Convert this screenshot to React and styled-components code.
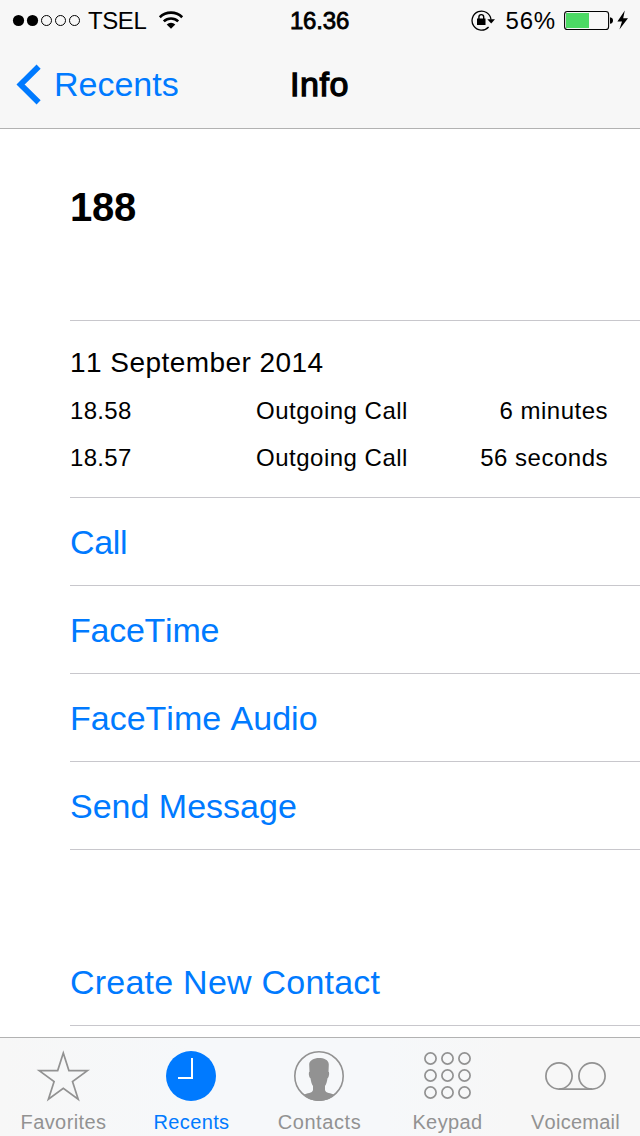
import React from "react";
import styled, { createGlobalStyle } from "styled-components";

const BLUE = "#007aff";
const GRAY = "#929292";
const HAIRLINE = "#c8c7cc";

const GlobalStyle = createGlobalStyle`
  * { box-sizing: border-box; }
  body {
    margin: 0;
    background: #fff;
    font-family: "Liberation Sans", Arial, sans-serif;
    font-kerning: none;
    color: #000;
  }
`;

const Screen = styled.div`
  display: flex;
  flex-direction: column;
  width: 640px;
  height: 1136px;
  overflow: hidden;
  background: #fff;
`;

const Header = styled.header`
  flex: none;
  height: 129px;
  background: #f7f7f7;
  border-bottom: 1px solid #b2b2b2;
`;

const StatusBar = styled.div`
  display: grid;
  grid-template-columns: 1fr auto 1fr;
  height: 40px;
  padding: 0 10px 0 12px;
  font-size: 24px;
  line-height: 42px;
`;

const StatusGroup = styled.div`
  display: flex;
  align-items: flex-start;
  justify-content: ${(p) => (p.$end ? "flex-end" : "flex-start")};

  svg { flex: none; display: block; }
`;

const Carrier = styled.span`
  margin: 0 11.5px 0 7px;
  letter-spacing: -0.4px;
`;

const Clock = styled.time`
  padding-right: 3px;
  letter-spacing: -0.2px;
  -webkit-text-stroke: 0.8px #000;
`;

const Percent = styled.span`
  margin: 0 8px 0 11px;
  letter-spacing: 0.8px;
`;

const NavBar = styled.nav`
  display: grid;
  grid-template-columns: 1fr auto 1fr;
  height: 88px;
  padding: 0 16px;
  font-size: 34px;
  line-height: 88px;
`;

const BackLink = styled.a`
  display: flex;
  align-items: flex-start;
  gap: 12px;
  color: ${BLUE};

  svg { display: block; margin-top: 24px; }
`;

const Title = styled.h1`
  margin: 0;
  padding-right: 1px;
  font-size: 34px;
  font-weight: normal;
  letter-spacing: 0.6px;
  -webkit-text-stroke: 1.3px #000;
`;

const Content = styled.main`
  flex: 1;
  min-height: 0;
  overflow: hidden;
  padding-left: 70px;
`;

const NumberBlock = styled.section`
  height: 192px;
  padding-top: 54px;
  border-bottom: 1px solid ${HAIRLINE};
`;

const PhoneNumber = styled.h2`
  margin: 0;
  font-size: 40px;
  line-height: 48px;
  letter-spacing: -0.2px;
`;

const History = styled.section`
  height: 177px;
  padding: 22px 32px 0 0;
  border-bottom: 1px solid ${HAIRLINE};
`;

const CallDate = styled.h3`
  margin: 0 0 4px;
  font-size: 28px;
  font-weight: normal;
  line-height: 40px;
  letter-spacing: 0.45px;
`;

const CallRow = styled.div`
  display: grid;
  grid-template-columns: 186px 1fr auto;
  height: 47px;
  font-size: 24px;
  line-height: 47px;
  letter-spacing: 0.5px;
`;

const CallTime = styled.span`
  letter-spacing: 0.3px;
`;

const Action = styled.button`
  display: block;
  width: 100%;
  height: ${(p) => (p.$spaced ? 176 : 88)}px;
  padding: ${(p) => (p.$spaced ? 88 : 0)}px 0 0;
  border: 0;
  border-bottom: 1px solid ${HAIRLINE};
  background: none;
  color: ${BLUE};
  font: inherit;
  font-size: 34px;
  line-height: 88px;
  text-align: left;
  letter-spacing: ${(p) => p.$tracking || 0}px;
`;

const TabBar = styled.footer`
  flex: none;
  display: grid;
  grid-template-columns: repeat(5, 128px);
  height: 99px;
  border-top: 1px solid #b2b2b2;
  background: linear-gradient(90deg, #f7f7f7 0%, #f6f8fa 30%, #f6f8fa 60%, #f7f7f7 80%);
`;

const Tab = styled.div`
  display: flex;
  flex-direction: column;
  align-items: center;
  padding-top: 10px;
  color: ${(p) => (p.$active ? BLUE : GRAY)};

  svg { display: block; }
`;

const TabLabel = styled.span`
  padding-right: 1px;
  font-size: 20px;
  line-height: 24px;
  margin-top: 6px;
  letter-spacing: ${(p) => p.$tracking}px;
`;

const SignalDots = () => (
  <svg width="69" height="40">
    {[0, 1, 2, 3, 4].map((i) => (
      <circle key={i} cx={6.5 + i * 14} cy="20.5" r={i < 2 ? 5.6 : 5}
        fill={i < 2 ? "#000" : "none"} stroke={i < 2 ? "none" : "#000"} strokeWidth="1" />
    ))}
  </svg>
);

const Wifi = () => (
  <svg width="26" height="40" viewBox="0 0 26 40" fill="none" stroke="#000" strokeWidth="2.6">
    <path d="M1.8 17.2a16 16 0 0 1 22.4 0" />
    <path d="M5.8 21.4a10.3 10.3 0 0 1 14.4 0" />
    <path d="M13 28.8l-4.3-4.2a6.2 6.2 0 0 1 8.6 0z" fill="#000" stroke="none" />
  </svg>
);

const RotationLock = () => (
  <svg width="24" height="40" viewBox="0 0 24 40" fill="none" stroke="#000">
    <path d="M17.6 27A9.5 9.5 0 1 1 20 19.5" strokeWidth="1.3" />
    <path d="M16.3 19.3H24L20.2 23.5z" fill="#000" stroke="none" />
    <rect x="6" y="18.5" width="8.5" height="6.5" fill="#000" stroke="none" />
    <path d="M7.9 19v-2a2.4 2.4 0 0 1 4.8 0v2" strokeWidth="1.4" />
  </svg>
);

const Battery = () => (
  <svg width="66" height="40" viewBox="0 0 66 40">
    <rect x="0.6" y="11.5" width="44" height="18" rx="2.8" fill="none" stroke="#000" strokeWidth="1.1" />
    <rect x="2" y="13" width="23" height="15" fill="#4cd964" />
    <path d="M46 17.2c2 .3 3 1.6 3 3.3s-1 3-3 3.3z" />
    <path d="M60.8 10.5L53.4 21.5H58L55.4 29.5L64 18.3H59.2z" />
  </svg>
);

const Chevron = () => (
  <svg width="26" height="42" viewBox="0 0 26 42" fill="none" stroke={BLUE} strokeWidth="5.8">
    <path d="M22.6 2.6L4.6 20.5L22.6 38.4" />
  </svg>
);

const Star = () => (
  <svg width="58" height="56" viewBox="0 0 58 56" fill="none" stroke="currentColor" strokeWidth="1.7">
    <path d="M28.3 5L33.9 22.6H52.4L37.5 33.5L43.2 51.2L28.3 40.3L13.4 51.2L19.1 33.5L4.2 22.6H22.7z" />
  </svg>
);

const RecentsIcon = () => (
  <svg width="58" height="56" viewBox="0 0 58 56">
    <circle cx="28" cy="28" r="25" fill="currentColor" />
    <path d="M29 10v20H15" fill="none" stroke="#fff" strokeWidth="2" />
  </svg>
);

const ContactsIcon = () => (
  <svg width="58" height="56" viewBox="0 0 58 56">
    <circle cx="28" cy="28" r="24.2" fill="none" stroke="currentColor" strokeWidth="1.6" />
    <path fill="currentColor" d="M28 10C32.500 10 37.800 11.500 37.800 16.500L37.500 23.800C38.700 24 38.200 29.500 36.500 30.200C36.200 33 35.300 36 34 38V42C34.500 45.500 40 44.500 43.500 47C39.500 50.800 34 53 28 53S16.500 50.800 12.500 47C16 44.500 21.500 45.500 22 42V38C20.700 36 19.800 33 19.500 30.200C17.800 29.500 17.300 24 18.500 23.800L18.200 16.500C18.200 12.500 23 10 28 10z" />
  </svg>
);

const KeypadIcon = () => (
  <svg width="56" height="56" viewBox="0 0 56 56" fill="none" stroke="currentColor" strokeWidth="1.7">
    {[10.5, 27.5, 44.5].map((y) =>
      [10.5, 27.5, 44.5].map((x) => <circle key={`${x}-${y}`} cx={x} cy={y} r="5.6" />)
    )}
  </svg>
);

const VoicemailIcon = () => (
  <svg width="64" height="56" viewBox="0 0 64 56" fill="none" stroke="currentColor" strokeWidth="1.7">
    <circle cx="15" cy="28" r="13.1" />
    <circle cx="48" cy="28" r="13.1" />
    <path d="M15 41.1H48" />
  </svg>
);

const calls = [
  { time: "18.58", kind: "Outgoing Call", duration: "6 minutes" },
  { time: "18.57", kind: "Outgoing Call", duration: "56 seconds" },
];

const actions = [
  { label: "Call", tracking: -0.3 },
  { label: "FaceTime", tracking: -0.25 },
  { label: "FaceTime Audio" },
  { label: "Send Message" },
  { label: "Create New Contact", spaced: true, tracking: 0.23 },
];

const tabs = [
  { label: "Favorites", Icon: Star, tracking: 0.4 },
  { label: "Recents", Icon: RecentsIcon, active: true, tracking: 0.35 },
  { label: "Contacts", Icon: ContactsIcon, tracking: 0.6 },
  { label: "Keypad", Icon: KeypadIcon, tracking: 0.4 },
  { label: "Voicemail", Icon: VoicemailIcon, tracking: 0.25 },
];

export default function App() {
  return (
    <Screen>
      <GlobalStyle />
      <Header>
        <StatusBar>
          <StatusGroup>
            <SignalDots />
            <Carrier>TSEL</Carrier>
            <Wifi />
          </StatusGroup>
          <Clock>16.36</Clock>
          <StatusGroup $end>
            <RotationLock />
            <Percent>56%</Percent>
            <Battery />
          </StatusGroup>
        </StatusBar>
        <NavBar>
          <BackLink>
            <Chevron />
            Recents
          </BackLink>
          <Title>Info</Title>
        </NavBar>
      </Header>
      <Content>
        <NumberBlock>
          <PhoneNumber>188</PhoneNumber>
        </NumberBlock>
        <History>
          <CallDate>11 September 2014</CallDate>
          {calls.map((call) => (
            <CallRow key={call.time}>
              <CallTime>{call.time}</CallTime>
              <span>{call.kind}</span>
              <span>{call.duration}</span>
            </CallRow>
          ))}
        </History>
        {actions.map((action) => (
          <Action key={action.label} $spaced={action.spaced} $tracking={action.tracking}>
            {action.label}
          </Action>
        ))}
      </Content>
      <TabBar>
        {tabs.map(({ label, Icon, active, tracking }) => (
          <Tab key={label} $active={active}>
            <Icon />
            <TabLabel $tracking={tracking}>{label}</TabLabel>
          </Tab>
        ))}
      </TabBar>
    </Screen>
  );
}
